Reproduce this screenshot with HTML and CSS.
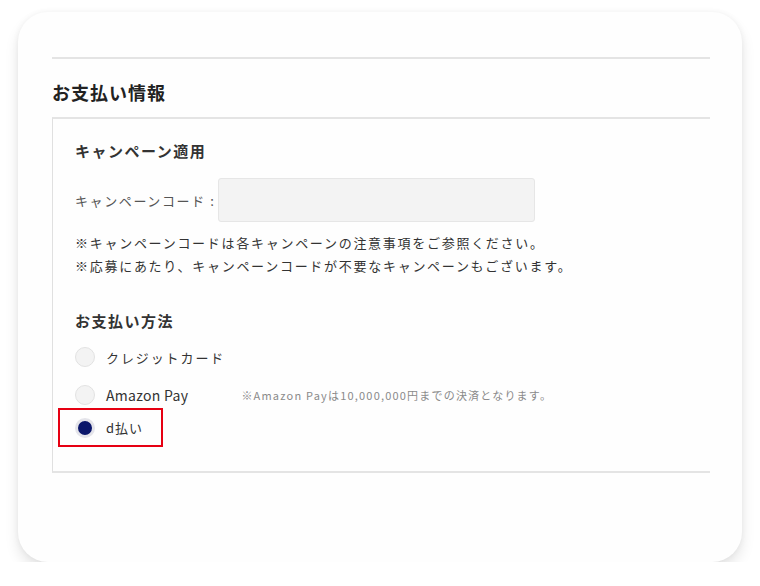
FILE: index.html
```html
<!DOCTYPE html>
<html lang="ja">
<head>
    <meta charset="UTF-8">
    <meta name="viewport" content="width=device-width, initial-scale=1.0">
    <title>お支払い情報</title>
    <link rel="stylesheet" href="styles.css">
</head>
<body>
    <div class="card">
        <div class="divider"></div>

        <h2 class="section-title">お支払い情報</h2>

        <div class="payment-box">
            <h3 class="sub-title">キャンペーン適用</h3>
            <div class="code-row">
                <label for="campaignCode">キャンペーンコード :</label>
                <input type="text" id="campaignCode">
            </div>
            <p class="notes">
                ※キャンペーンコードは各キャンペーンの注意事項をご参照ください。<br>
                ※応募にあたり、キャンペーンコードが不要なキャンペーンもございます。
            </p>

            <h3 class="sub-title method-title">お支払い方法</h3>
            <div class="method-list">
                <label class="method">
                    <span class="radio"></span>
                    <span class="method-name">クレジットカード</span>
                </label>
                <label class="method method-amazon">
                    <span class="radio"></span>
                    <span class="method-name latin">Amazon Pay</span>
                    <span class="method-note">※Amazon Payは10,000,000円までの決済となります。</span>
                </label>
                <label class="method method-selected">
                    <span class="radio checked"></span>
                    <span class="method-name short">d払い</span>
                </label>
            </div>
        </div>
    </div>
</body>
</html>
```

FILE: styles.css
```css
* {
    margin: 0;
    padding: 0;
    box-sizing: border-box;
}

body {
    font-family: "Noto Sans CJK JP", "Noto Sans", sans-serif;
    background: #ffffff;
    color: #333;
    padding: 12px 18px 0;
}

.card {
    width: 724px;
    background: #fefefe;
    border-radius: 30px;
    padding: 45px 32px 89px 34px;
    box-shadow: 0 8px 14px rgba(0,0,0,0.10), 0 0 6px rgba(0,0,0,0.05);
}

.divider {
    border-top: 2px solid #e4e4e4;
}

.section-title {
    margin-top: 20px;
    font-size: 18px;
    line-height: 26px;
    font-weight: 700;
    letter-spacing: 1px;
    color: #222;
}

.payment-box {
    margin-top: 12px;
    border-top: 2px solid #e4e4e4;
    border-left: 1px solid #e0e0e0;
    border-bottom: 2px solid #e4e4e4;
    padding: 21px 0 24px 22px;
}

.sub-title {
    font-size: 15px;
    line-height: 22px;
    font-weight: 700;
    letter-spacing: 1.5px;
    color: #333;
}

.code-row {
    display: flex;
    align-items: center;
    margin-top: 16px;
}

.code-row label {
    font-size: 13px;
    letter-spacing: 1.6px;
    color: #555;
}

.code-row input {
    width: 317px;
    height: 44px;
    margin-left: 3px;
    background: #f3f3f3;
    border: 1px solid #e6e6e6;
    border-radius: 3px;
}

.notes {
    margin-top: 9px;
    font-size: 13px;
    line-height: 23px;
    letter-spacing: 1.72px;
    color: #333;
}

.method-title {
    margin-top: 33px;
}

.method-list {
    margin-top: 10px;
}

.method {
    display: flex;
    align-items: center;
    height: 30px;
    margin-top: 8px;
}

.method:first-child {
    margin-top: 0;
}

.radio {
    width: 20px;
    height: 20px;
    border-radius: 50%;
    background: #f3f3f3;
    border: 1px solid #e2e2e2;
    flex-shrink: 0;
}

.radio.checked {
    background: #0b176b;
    border: 3px solid #e4e4ea;
}

.method-name {
    margin-left: 11px;
    font-size: 13px;
    letter-spacing: 1.9px;
    color: #333;
}

.method-name.latin {
    font-size: 14px;
    letter-spacing: 0.3px;
}

.method-name.short {
    letter-spacing: 1px;
}

.method-note {
    margin-left: 53px;
    font-size: 11px;
    letter-spacing: 1.2px;
    color: #8a8a8a;
}

.method-selected {
    width: 105px;
    height: 39px;
    margin-top: -2px;
    margin-left: -17px;
    padding-left: 15px;
    border: 2px solid #e60012;
}
```
